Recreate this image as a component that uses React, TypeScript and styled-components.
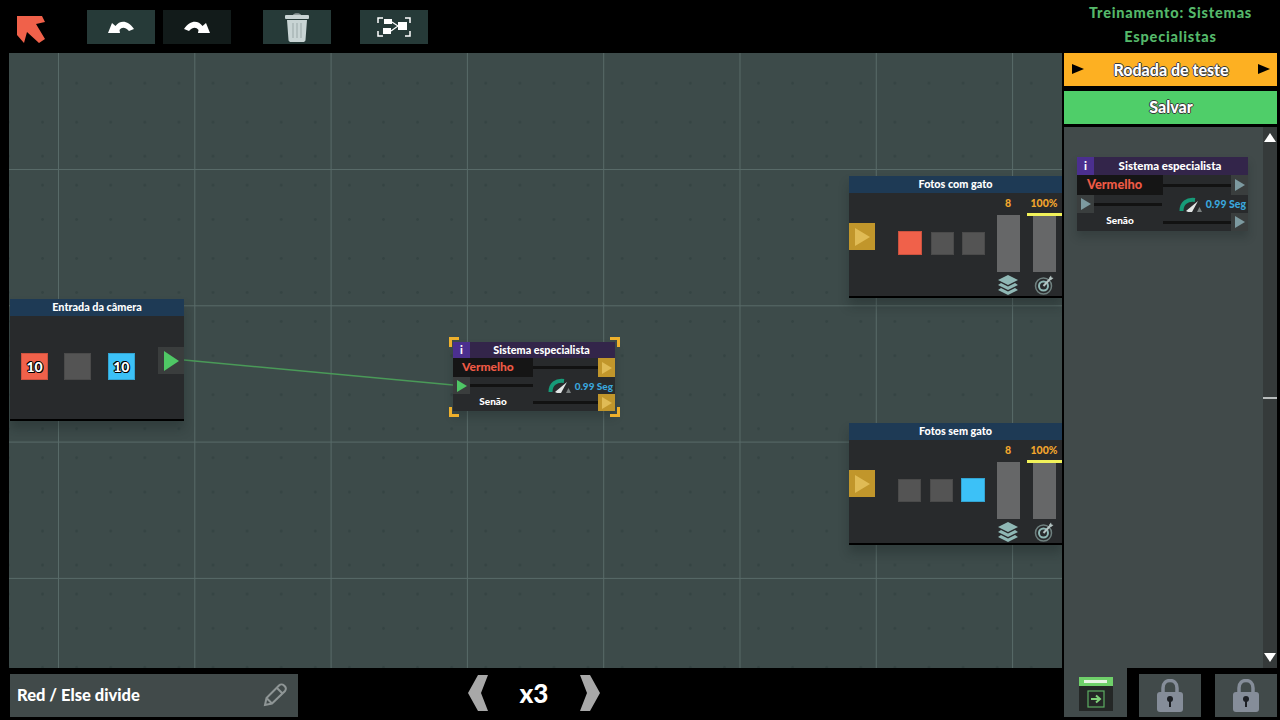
import React from 'react';
import styled, { createGlobalStyle } from 'styled-components';

const GlobalStyle = createGlobalStyle`
  html, body {
    margin: 0;
    padding: 0;
    background: #000;
    overflow: hidden;
  }
  * {
    box-sizing: border-box;
  }
  body {
    font-family: Lato, "Open Sans", sans-serif;
    font-weight: 900;
    color: #fff;
  }
`;

const textEdge = `
  text-shadow: -1px 0 #3a3a3a, 1px 0 #3a3a3a, 0 -1px #3a3a3a, 0 1px #3a3a3a;
`;

const BackArrow = () => (
  <svg width="30" height="30" viewBox="0 0 30 30">
    <polygon points="1,1 26,1 29,7 20,9 29,24 23,28 11,17 8,28 1,20" fill="#f0614a" />
  </svg>
);

const UndoIcon = ({ flip }: { flip?: boolean }) => (
  <svg width="28" height="14" viewBox="0 0 28 14">
    <path
      transform={flip ? 'translate(28 0) scale(-1 1)' : undefined}
      d="M1 13 L5 3 L8.5 6 C13 0 21 0 27 9 L22 11 C18 7 15 7 12.500 10 L13 13 Z"
      fill="#fff"
    />
  </svg>
);

const TrashIcon = () => (
  <svg width="26" height="30" viewBox="0 0 26 30">
    <path d="M9 3 C9 0.500 17 0.500 17 3 Z" fill="#8c9999" />
    <rect x="1" y="3" width="24" height="4" rx="1" fill="#c8d4d4" />
    <path d="M3 8 H23 L21.500 28 C21.400 29.500 20 30 19 30 H7 C6 30 4.600 29.500 4.500 28 Z" fill="#c8d4d4" />
    <path d="M9 11 V26 M13 11 V26 M17 11 V26" stroke="#a9b6b6" strokeWidth="1.500" />
  </svg>
);

const GroupIcon = () => (
  <svg width="34" height="20" viewBox="0 0 34 20" fill="none">
    <path d="M1 6 V1 H6 M28 1 H33 V6 M1 14 V19 H6 M28 19 H33 V14" stroke="#fff" strokeWidth="1.500" />
    <rect x="7" y="2" width="8" height="5" fill="#fff" />
    <rect x="6" y="11" width="8" height="6" fill="#fff" />
    <rect x="21" y="5" width="9" height="8" fill="#fff" />
    <path d="M15 5 L21 9 L14 14" stroke="#fff" strokeWidth="1.200" />
  </svg>
);

const PencilIcon = () => (
  <svg width="24" height="24" viewBox="0 0 24 24" fill="none">
    <path
      d="M2 22 L3.500 15 L16 2.500 C17.500 1 19.500 1 21 2.500 L22 3.500 C23.300 5 23 6.500 22 8 L9 20.500 Z M3.500 15 L9 20.500 M14 5 L19.500 10.500"
      stroke="#8f9696"
      strokeWidth="2"
    />
  </svg>
);

const LayersIcon = () => (
  <svg width="20" height="20" viewBox="0 0 20 20">
    <polygon points="10,0 20,5 10,10 0,5" fill="#8fb8b5" />
    <polygon points="3,8 10,11.500 17,8 20,10 10,15 0,10" fill="#8fb8b5" />
    <polygon points="3,13 10,16.500 17,13 20,15 10,20 0,15" fill="#8fb8b5" />
  </svg>
);

const TargetIcon = () => (
  <svg width="20" height="20" viewBox="0 0 20 20" fill="none">
    <circle cx="9.500" cy="11" r="8" stroke="#6f807f" strokeWidth="1.500" />
    <circle cx="9.500" cy="11" r="4.500" stroke="#8fb8b5" strokeWidth="2" />
    <path d="M9.500 11 L17 3" stroke="#b5c4c3" strokeWidth="2" />
    <path d="M15 3 L17 0.500 L17.500 2.500 L19.500 3 L17 5 Z" fill="#b5c4c3" />
  </svg>
);

const GaugeIcon = () => (
  <svg width="23" height="15" viewBox="0 0 23 15" fill="none">
    <path d="M2.500 14 C2.500 6 8 2 16 3" stroke="#179a78" strokeWidth="4" />
    <path d="M7 14 L19 4 L13 15 L9 15 Z" fill="#e3e6e6" />
    <path d="M18 15 L20.500 10 L23 15 Z" fill="#7b8080" />
  </svg>
);

const LockIcon = () => (
  <svg width="26" height="33" viewBox="0 0 26 33">
    <path d="M6 14 V9 C6 -1 20 -1 20 9 V14" fill="none" stroke="#858d99" strokeWidth="3.500" />
    <rect x="0" y="13" width="26" height="20" rx="3" fill="#858d99" />
    <circle cx="13" cy="20" r="3" fill="#1c1f24" />
    <rect x="12" y="21" width="2" height="7" fill="#1c1f24" />
  </svg>
);

const Screen = styled.div`
  display: grid;
  grid-template-columns: 1064px 216px;
  width: 1280px;
  height: 720px;
  background: #000;
`;

const Workspace = styled.div`
  display: flex;
  flex-direction: column;
`;

const TopBar = styled.header`
  display: flex;
  align-items: flex-start;
  height: 53px;
  padding: 10px 0 0 16px;
`;

const Logo = styled.div`
  display: flex;
  width: 71px;
  margin-top: 5px;
`;

const ToolButton = styled.button<{ $dark?: boolean; $gapLeft?: number }>`
  display: flex;
  align-items: center;
  justify-content: center;
  width: 68px;
  height: 34px;
  padding: 0;
  margin-left: ${(p) => p.$gapLeft ?? 0}px;
  border: 0;
  background: ${(p) => (p.$dark ? '#121b1a' : '#263a38')};
`;

const dot = 'radial-gradient(circle at center, #354443 1.2px, transparent 1.6px)';

const Canvas = styled.main`
  position: relative;
  width: 1053px;
  height: 615px;
  margin-left: 9px;
  overflow: hidden;
  background-color: #3d4b4a;
  background-image:
    linear-gradient(90deg, #586a68 1px, transparent 1px),
    linear-gradient(180deg, #586a68 1px, transparent 1px),
    ${dot}, ${dot}, ${dot}, ${dot};
  background-size:
    136.3px 136.3px,
    136.3px 136.3px,
    34.1px 136.3px,
    34.1px 136.3px,
    34.1px 136.3px,
    34.1px 136.3px;
  background-position: 49px 0, 0 116px, 16.500px -38px, 16.500px 1px, 16.500px 35px, 16.500px 64px;
`;

const Wire = styled.svg`
  position: absolute;
  inset: 0;
  width: 100%;
  height: 100%;
  pointer-events: none;
`;

const SourceNode = styled.section`
  position: absolute;
  left: 1px;
  top: 246px;
  width: 174px;
  height: 122px;
  background: #282a2c;
  border-bottom: 2px solid #000;
  box-shadow: 0 8px 10px rgba(20, 30, 30, 0.3);
`;

const BinNode = styled.section<{ $top: number }>`
  position: absolute;
  left: 840px;
  top: ${(p) => p.$top}px;
  width: 213px;
  height: 122px;
  background: #282a2c;
  border-bottom: 2px solid #000;
  box-shadow: 0 8px 10px rgba(20, 30, 30, 0.3);
`;

const NodeHeader = styled.h3`
  display: flex;
  align-items: center;
  justify-content: center;
  height: 17px;
  margin: 0;
  padding-bottom: 2px;
  background: #1e3a55;
  font-size: 10.800px;
  font-weight: 900;
`;

const SourceBody = styled.div`
  display: flex;
  align-items: flex-start;
  height: 103px;
`;

const SourceSlots = styled.div`
  display: flex;
  gap: 16.400px;
  margin: 37px 0 0 11px;
`;

const Slot = styled.div<{ $color?: string; $size: number }>`
  display: flex;
  align-items: center;
  justify-content: center;
  width: ${(p) => p.$size}px;
  height: ${(p) => p.$size}px;
  background: ${(p) => p.$color ?? '#545454'};
  border: 1px solid ${(p) => (p.$color ? 'rgba(0, 0, 0, 0.15)' : '#4a4a4a')};
  font-size: 14px;
  text-shadow: -1px 0 #000, 1px 0 #000, 0 -1px #000, 0 1px #000, 1px 1px #000, -1px -1px #000;
`;

const BigPort = styled.div<{ $color: string; $top: number; $auto?: boolean }>`
  display: flex;
  align-items: center;
  justify-content: center;
  width: 26px;
  height: 27px;
  margin-top: ${(p) => p.$top}px;
  margin-left: ${(p) => (p.$auto ? 'auto' : '0')};
  background: ${(p) => p.$color};
`;

const PortArrow = styled.span<{ $color: string; $w: number; $h: number }>`
  width: 0;
  height: 0;
  border-left: ${(p) => p.$w}px solid ${(p) => p.$color};
  border-top: ${(p) => p.$h}px solid transparent;
  border-bottom: ${(p) => p.$h}px solid transparent;
`;

const BinBody = styled.div`
  display: flex;
  align-items: flex-start;
  height: 103px;
`;

const BinSlots = styled.div`
  display: flex;
  gap: 8.500px;
  margin: 38px 0 0 23px;
  align-items: center;
`;

const Stats = styled.div`
  display: flex;
  margin-left: auto;
`;

const StatColumn = styled.div`
  display: flex;
  flex-direction: column;
  align-items: center;
  width: 36px;
`;

const StatLabel = styled.div`
  display: flex;
  align-items: center;
  justify-content: center;
  height: 21px;
  padding-bottom: 1px;
  color: #f2a52c;
  font-size: 10.500px;
  white-space: nowrap;
`;

const StatBar = styled.div<{ $full?: boolean }>`
  position: relative;
  width: 23px;
  height: 57px;
  margin-top: 1px;
  background: #666768;
  ${(p) =>
    p.$full &&
    `
    &::before {
      content: '';
      position: absolute;
      left: -6px;
      top: -2px;
      width: 35px;
      height: 3px;
      background: #f2f25a;
    }
  `}
`;

const StatIcon = styled.div`
  display: flex;
  margin-top: 3px;
`;

const ExpertNode = styled.section<{ $width: number }>`
  display: flex;
  flex-direction: column;
  width: ${(p) => p.$width}px;
  background: #282a2c;
  box-shadow: 0 6px 8px rgba(20, 30, 30, 0.25);
`;

const PlacedExpert = styled.div`
  position: absolute;
  left: 444px;
  top: 289px;
`;

const Bracket = styled.i<{ $x: 'left' | 'right'; $y: 'top' | 'bottom' }>`
  position: absolute;
  ${(p) => p.$x}: ${(p) => (p.$x === 'left' ? -4 : -5)}px;
  ${(p) => p.$y}: ${(p) => (p.$y === 'top' ? -5 : -6)}px;
  width: 10px;
  height: 10px;
  border-${(p) => p.$x}: 3px solid #eeb02c;
  border-${(p) => p.$y}: 3px solid #eeb02c;
`;

const ExpertTitle = styled.div<{ $height: number; $tab: number; $large?: boolean }>`
  display: grid;
  grid-template-columns: ${(p) => p.$tab}px 1fr;
  height: ${(p) => p.$height}px;
  background: #33254a;
  font-size: ${(p) => (p.$large ? 11.5 : 10.8)}px;
`;

const InfoTab = styled.span`
  display: flex;
  align-items: center;
  justify-content: center;
  padding-bottom: 2px;
  background: #4b2f8f;
`;

const TitleText = styled.span`
  display: flex;
  align-items: center;
  justify-content: center;
  padding: 0 2px 2px 0;
`;

const ExpertRow = styled.div<{ $height: number }>`
  display: flex;
  align-items: center;
  height: ${(p) => p.$height}px;
`;

const RuleName = styled.div<{ $active?: boolean; $width: number; $large?: boolean }>`
  display: flex;
  align-items: center;
  justify-content: ${(p) => (p.$active ? 'flex-start' : 'center')};
  align-self: stretch;
  width: ${(p) => p.$width}px;
  padding-left: ${(p) => (p.$active ? (p.$large ? 10 : 9) : 0)}px;
  padding-bottom: ${(p) => (p.$active ? 2 : 4)}px;
  background: ${(p) => (p.$active ? '#151515' : 'transparent')};
  color: ${(p) => (p.$active ? '#ee5a45' : '#fff')};
  font-size: ${(p) => (p.$active ? (p.$large ? 12.8 : 12) : 10)}px;
`;

const Trace = styled.div`
  flex: 1;
  height: 3px;
  background: #121212;
`;

const SmallPort = styled.div<{ $color: string; $width: number }>`
  display: flex;
  align-items: center;
  justify-content: center;
  align-self: stretch;
  width: ${(p) => p.$width}px;
  background: ${(p) => p.$color};
`;

const Speed = styled.div<{ $width: number; $large?: boolean }>`
  display: flex;
  align-items: center;
  justify-content: flex-end;
  gap: 4px;
  width: ${(p) => p.$width}px;
  padding-right: 2px;
  color: #3aa6dc;
  font-size: ${(p) => (p.$large ? 10.5 : 10)}px;
  white-space: nowrap;
`;

const Footer = styled.footer`
  display: flex;
  align-items: center;
  height: 52px;
  padding: 6px 0 3px 10px;
`;

const NameField = styled.div`
  display: flex;
  align-items: center;
  justify-content: space-between;
  width: 288px;
  height: 43px;
  padding: 0 11px 2px 7px;
  background: #414a4a;
  font-size: 16.500px;
`;

const SpeedControl = styled.div`
  display: flex;
  align-items: center;
  justify-content: space-between;
  width: 132px;
  margin: -5px 0 0 170px;
  font-size: 26px;
`;

const Chevron = styled.svg`
  display: block;
`;

const Sidebar = styled.aside`
  display: flex;
  flex-direction: column;
  width: 213px;
`;

const TrainingTitle = styled.h1`
  height: 53px;
  margin: 0;
  padding-top: 1px;
  color: #55b86a;
  font-size: 14.500px;
  font-weight: 900;
  line-height: 24px;
  letter-spacing: 0.8px;
  text-align: center;
`;

const ActionButton = styled.button<{ $color: string; $height: number }>`
  display: flex;
  align-items: center;
  justify-content: space-between;
  height: ${(p) => p.$height}px;
  padding: 0 7px 1px 8px;
  border: 0;
  background: ${(p) => p.$color};
  color: #fff;
  font-family: inherit;
  font-size: 16px;
  font-weight: 900;
  ${textEdge}
`;

const ButtonLabel = styled.span`
  flex: 1;
  text-align: center;
`;

const SaveButton = styled(ActionButton)`
  margin-top: 5px;
  padding-bottom: 2px;
  justify-content: center;
`;

const Library = styled.div`
  display: flex;
  justify-content: space-between;
  height: 541px;
  margin-top: 3px;
  background: #414a4a;
`;

const LibraryList = styled.div`
  padding: 30px 0 0 13px;
`;

const Scrollbar = styled.div`
  position: relative;
  display: flex;
  flex-direction: column;
  align-items: center;
  justify-content: space-between;
  width: 14px;
  padding: 6px 0;
  background: #353a3a;
`;

const ScrollThumb = styled.i`
  position: absolute;
  left: 0;
  top: 270px;
  width: 14px;
  height: 2px;
  background: #b8bcbc;
`;

const Tabs = styled.nav`
  display: flex;
  justify-content: space-between;
  height: 49px;
`;

const ActiveTab = styled.div`
  display: flex;
  justify-content: center;
  width: 63px;
  padding-top: 9px;
  background: #414a4a;
`;

const LockedTab = styled.div`
  display: flex;
  align-items: center;
  justify-content: center;
  width: 62px;
  height: 43px;
  margin-top: 6px;
  background: #414a4a;
`;

const LockedGroup = styled.div`
  display: flex;
  gap: 14px;
`;

const TabBadge = styled.div`
  display: flex;
  flex-direction: column;
  width: 34px;
  height: 34px;
`;

const BadgeTop = styled.div`
  display: flex;
  align-items: center;
  justify-content: center;
  height: 9px;
  background: #6fd06a;
`;

const BadgeStripe = styled.i`
  width: 23px;
  height: 3px;
  background: #e8f4e4;
`;

const BadgeBody = styled.div`
  display: flex;
  align-items: center;
  justify-content: center;
  flex: 1;
  background: #242726;
`;

const EnterIcon = () => (
  <svg width="18" height="18" viewBox="0 0 18 18" fill="none">
    <rect x="1" y="1" width="16" height="16" stroke="#5cae62" strokeWidth="1.200" />
    <path d="M4 9 H12 M9 5.500 L13 9 L9 12.500" stroke="#7fd27a" strokeWidth="2" />
  </svg>
);

const ScrollArrow = styled.span<{ $down?: boolean }>`
  width: 0;
  height: 0;
  border-left: 6px solid transparent;
  border-right: 6px solid transparent;
  ${(p) => (p.$down ? 'border-top' : 'border-bottom')}: 9px solid #fff;
`;

const sourceSlots = [
  { color: '#f0614a', label: '10' },
  {},
  { color: '#3cc1f7', label: '10' },
];

type ExpertCardProps = {
  width: number;
  titleHeight: number;
  tab: number;
  rows: [number, number, number];
  nameWidth: number;
  portColor: string;
  arrowColor: string;
  inputColor: string;
  inputArrow: string;
  speedWidth: number;
  large?: boolean;
};

const ExpertCard = ({
  width,
  titleHeight,
  tab,
  rows,
  nameWidth,
  portColor,
  arrowColor,
  inputColor,
  inputArrow,
  speedWidth,
  large,
}: ExpertCardProps) => (
  <ExpertNode $width={width}>
    <ExpertTitle $height={titleHeight} $tab={tab} $large={large}>
      <InfoTab>i</InfoTab>
      <TitleText>Sistema especialista</TitleText>
    </ExpertTitle>
    <ExpertRow $height={rows[0]}>
      <RuleName $active $width={nameWidth} $large={large}>Vermelho</RuleName>
      <Trace />
      <SmallPort $color={portColor} $width={tab}>
        <PortArrow $color={arrowColor} $w={10} $h={6} />
      </SmallPort>
    </ExpertRow>
    <ExpertRow $height={rows[1]}>
      <SmallPort $color={inputColor} $width={tab}>
        <PortArrow $color={inputArrow} $w={10} $h={6} />
      </SmallPort>
      <Trace />
      <Speed $width={speedWidth} $large={large}>
        <GaugeIcon />
        0.99 Seg
      </Speed>
    </ExpertRow>
    <ExpertRow $height={rows[2]}>
      <RuleName $width={nameWidth}>Senão</RuleName>
      <Trace />
      <SmallPort $color={portColor} $width={tab}>
        <PortArrow $color={arrowColor} $w={10} $h={6} />
      </SmallPort>
    </ExpertRow>
  </ExpertNode>
);

const ResultBin = ({ top, title, slots }: { top: number; title: string; slots: (string | undefined)[] }) => (
  <BinNode $top={top}>
    <NodeHeader>{title}</NodeHeader>
    <BinBody>
      <BigPort $color="#c1962b" $top={30}>
        <PortArrow $color="#e0bb55" $w={15} $h={9} />
      </BigPort>
      <BinSlots>
        {slots.map((color, i) => (
          <Slot key={i} $color={color} $size={color ? 24 : 23} />
        ))}
      </BinSlots>
      <Stats>
        <StatColumn>
          <StatLabel>8</StatLabel>
          <StatBar />
          <StatIcon>
            <LayersIcon />
          </StatIcon>
        </StatColumn>
        <StatColumn>
          <StatLabel>100%</StatLabel>
          <StatBar $full />
          <StatIcon>
            <TargetIcon />
          </StatIcon>
        </StatColumn>
      </Stats>
    </BinBody>
  </BinNode>
);

export default function App() {
  return (
    <Screen>
      <GlobalStyle />
      <Workspace>
        <TopBar>
          <Logo>
            <BackArrow />
          </Logo>
          <ToolButton aria-label="Desfazer">
            <UndoIcon />
          </ToolButton>
          <ToolButton $dark $gapLeft={8} aria-label="Refazer">
            <UndoIcon flip />
          </ToolButton>
          <ToolButton $gapLeft={32} aria-label="Excluir">
            <TrashIcon />
          </ToolButton>
          <ToolButton $gapLeft={29} aria-label="Agrupar">
            <GroupIcon />
          </ToolButton>
        </TopBar>
        <Canvas>
          <Wire>
            <line x1="175" y1="307" x2="444" y2="332" stroke="#4a9a58" strokeWidth="1.500" />
          </Wire>
          <SourceNode>
            <NodeHeader>Entrada da câmera</NodeHeader>
            <SourceBody>
              <SourceSlots>
                {sourceSlots.map((slot, i) => (
                  <Slot key={i} $color={slot.color} $size={27}>
                    {slot.label}
                  </Slot>
                ))}
              </SourceSlots>
              <BigPort $color="#3a3d3d" $top={31} $auto>
                <PortArrow $color="#4fc765" $w={15} $h={10} />
              </BigPort>
            </SourceBody>
          </SourceNode>
          <PlacedExpert>
            <Bracket $x="left" $y="top" />
            <Bracket $x="right" $y="top" />
            <Bracket $x="left" $y="bottom" />
            <Bracket $x="right" $y="bottom" />
            <ExpertCard
              width={162}
              titleHeight={16}
              tab={17}
              rows={[19, 17, 17]}
              nameWidth={80}
              portColor="#c1962b"
              arrowColor="#e0bb55"
              inputColor="#3a3d3d"
              inputArrow="#4fc765"
              speedWidth={82}
            />
          </PlacedExpert>
          <ResultBin top={123} title="Fotos com gato" slots={['#f0614a', undefined, undefined]} />
          <ResultBin top={370} title="Fotos sem gato" slots={[undefined, undefined, '#3cc1f7']} />
        </Canvas>
        <Footer>
          <NameField>
            Red / Else divide
            <PencilIcon />
          </NameField>
          <SpeedControl>
            <Chevron width="20" height="36" viewBox="0 0 20 36">
              <polygon points="10,0 20,0 13,18 20,36 10,36 0,18" fill="#a8a8a8" />
            </Chevron>
            x3
            <Chevron width="20" height="36" viewBox="0 0 20 36">
              <polygon points="0,0 10,0 20,18 10,36 0,36 7,18" fill="#a8a8a8" />
            </Chevron>
          </SpeedControl>
        </Footer>
      </Workspace>
      <Sidebar>
        <TrainingTitle>Treinamento: Sistemas Especialistas</TrainingTitle>
        <ActionButton $color="#fdb022" $height={33}>
          <PortArrow $color="#000" $w={12} $h={5} />
          <ButtonLabel>Rodada de teste</ButtonLabel>
          <PortArrow $color="#000" $w={12} $h={5} />
        </ActionButton>
        <SaveButton $color="#4fce69" $height={33}>
          Salvar
        </SaveButton>
        <Library>
          <LibraryList>
            <ExpertCard
              width={171}
              titleHeight={18}
              tab={17}
              rows={[20, 18, 18]}
              nameWidth={86}
              portColor="#3a3e3e"
              arrowColor="#7d9aa0"
              inputColor="#3a3e3e"
              inputArrow="#7d9aa0"
              speedWidth={86}
              large
            />
          </LibraryList>
          <Scrollbar>
            <ScrollArrow />
            <ScrollThumb />
            <ScrollArrow $down />
          </Scrollbar>
        </Library>
        <Tabs>
          <ActiveTab>
            <TabBadge>
              <BadgeTop>
                <BadgeStripe />
              </BadgeTop>
              <BadgeBody>
                <EnterIcon />
              </BadgeBody>
            </TabBadge>
          </ActiveTab>
          <LockedGroup>
            <LockedTab>
              <LockIcon />
            </LockedTab>
            <LockedTab>
              <LockIcon />
            </LockedTab>
          </LockedGroup>
        </Tabs>
      </Sidebar>
    </Screen>
  );
}
